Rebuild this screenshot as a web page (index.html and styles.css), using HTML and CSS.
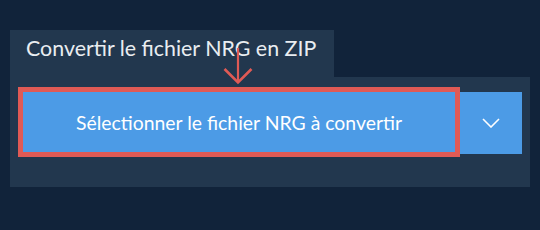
FILE: index.html
```html
<!DOCTYPE html>
<html lang="fr">
<head>
    <meta charset="UTF-8">
    <meta name="viewport" content="width=device-width, initial-scale=1.0">
    <title>Convertir NRG en ZIP</title>
    <link rel="stylesheet" href="styles.css">
</head>
<body>
    <div class="converter">
        <div class="tab">Convertir le fichier NRG en ZIP</div>
        <div class="panel">
            <div class="picker">
                <button type="button" class="select-btn">Sélectionner le fichier NRG à convertir</button>
                <button type="button" class="more-btn" aria-label="Plus d'options">
                    <svg width="18" height="10" viewBox="0 0 18 10">
                        <polyline points="1,1 9,9 17,1" fill="none" stroke="#fff" stroke-width="1.6"/>
                    </svg>
                </button>
            </div>
        </div>
        <svg class="hint-arrow" width="30" height="38" viewBox="0 0 30 38">
            <line x1="15" y1="0" x2="15" y2="34" stroke="#e05a55" stroke-width="2.2"/>
            <polyline points="1.5,21 15,34.5 28.5,21" fill="none" stroke="#e05a55" stroke-width="2.6"/>
        </svg>
    </div>
</body>
</html>
```

FILE: styles.css
```css
body {
    margin: 0;
    padding: 30px 10px 0;
    background-color: #11233a;
    font-family: Lato, "Open Sans", sans-serif;
}

.converter {
    position: relative;
    width: 520px;
}

.tab {
    width: fit-content;
    height: 47px;
    box-sizing: border-box;
    padding: 1px 18px 0 16px;
    line-height: 35px;
    background-color: #22374e;
    color: #e9edf1;
    font-size: 21.4px;
}

.panel {
    padding: 10px 8px 30px;
    background-color: #22374e;
}

.picker {
    display: flex;
    align-items: flex-start;
}

.select-btn {
    width: 442px;
    height: 70px;
    margin: 0;
    border: 5px solid #e05a55;
    background-color: #4c9be6;
    color: #fff;
    font-family: inherit;
    font-size: 19.4px;
    cursor: pointer;
}

.more-btn {
    display: flex;
    align-items: center;
    justify-content: center;
    width: 62px;
    height: 62px;
    margin: 5px 0 0;
    padding: 0;
    border: none;
    background-color: #4c9be6;
    cursor: pointer;
}

.hint-arrow {
    position: absolute;
    left: 213px;
    top: 18px;
}
```
